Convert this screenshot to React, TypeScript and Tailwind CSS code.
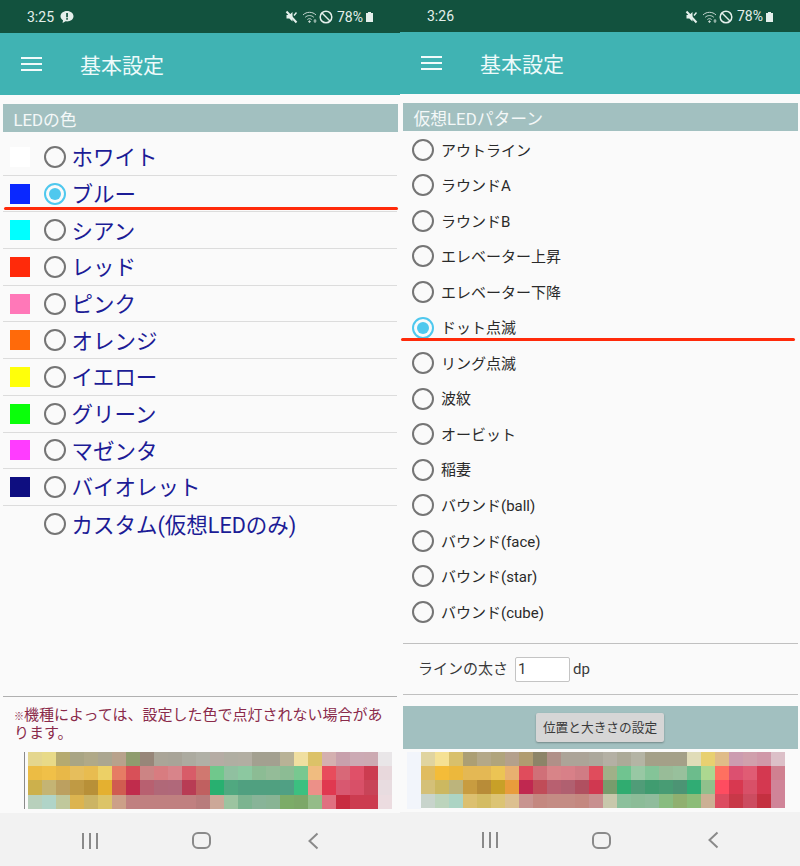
const leftMosaic = [
  ['e4d68e','e8da88','b5aa70','a9a584','b0a988','aba690','b8a28c','8f9c6e','978679','aaa598','a8a498','acaba0','b0b0a6','b5aca4','b0aea2','b2aea2','a3a090','a3a090','b8b296','f0dfa0','dcc268','d4b0b0','c8a0ac','ccaab4','ccaab2','e9e6e8'],
  ['ecbc44','f0c048','e8b848','e6be5c','e8bc50','ecd066','e67c64','d85058','cc8484','d87c80','d8848a','d85c68','d07870','70c88c','90c0a0','8cc8a0','8cbc94','94bc98','8cbc94','78c890','f0bc80','e84c5c','d86878','e05068','cc3c50','e8d8dc'],
  ['ccb04c','c4b474','bca060','c09a44','b89038','e4b030','d05c50','c02c4c','b86070','b06878','b0687a','b83c54','c06060','28b070','50a880','50a080','50a080','50a080','50a084','3cc080','ec9088','e03850','d85870','d85068','c84458','e8dce0'],
  ['b8d0bc','b0d4c8','c0c89c','dcb450','ccb464','dcc468','cca088','c08080','c08080','c08080','c08080','c08080','b87c7c','cca898','9cc4a0','7cb490','88b498','88b494','7cac68','7ca868','94bc88','e07080','c82c40','cc3c50','cc3c50','ecdce0'],
]

const rightMosaic = [
  ['e0d4a0','f5e194','d8c06c','ac9f74','b4a888','b0a47c','b4a08c','b09c70','8c8468','b09088','aca498','aca498','aca89c','b4b0a4','acaa98','b4b4a4','a4a088','a4a088','a4a088','e0dcb8','e8d070','e0bc88','cc9cb0','d0a0ac','d098a8','dcc0c8'],
  ['e0bc60','f4bc38','ecb83c','e4b854','e4b854','ecc454','e8b070','e04c5c','d07078','d88488','d88088','d07c84','e04c5c','a0b088','70c490','98c8a4','84c498','98bc98','98c09c','6cbc8c','acd890','ff7060','dc5070','e05c74','d43850','d08090'],
  ['d4c078','ccb860','bcb47c','c89c40','b88c38','c8a028','e89c3c','c02850','c04c58','b86070','b06070','b05060','d03850','789c6c','30ac70','509c78','409c70','489c74','4c9474','30ac74','90c08c','ff4c60','d83850','d85068','d43850','d08498'],
  ['c8d4cc','bcd4bc','acd4c4','dcc070','d4bc64','dcc474','dcc090','c89490','c48880','c48c84','c48c84','c48880','c89090','c8c8ac','8cc09c','8cbc98','90bc9c','88bc80','90b070','8cbc78','ccb094','dc4c60','c83848','cc4c60','c43040','d08498'],
]

const colors = [
  ['ホワイト', 'bg-white'],
  ['ブルー', 'bg-[#0a28ff]'],
  ['シアン', 'bg-[#00ffff]'],
  ['レッド', 'bg-[#ff2a0a]'],
  ['ピンク', 'bg-[#ff78b8]'],
  ['オレンジ', 'bg-[#ff6a0a]'],
  ['イエロー', 'bg-[#ffff0a]'],
  ['グリーン', 'bg-[#0aff0a]'],
  ['マゼンタ', 'bg-[#ff3cff]'],
  ['バイオレット', 'bg-[#0e0e80]'],
  ['カスタム(仮想LEDのみ)', ''],
]

const patterns = ['アウトライン', 'ラウンドA', 'ラウンドB', 'エレベーター上昇', 'エレベーター下降', 'ドット点滅', 'リング点滅', '波紋', 'オービット', '稲妻', 'バウンド(ball)', 'バウンド(face)', 'バウンド(star)', 'バウンド(cube)']

function Radio({ checked }: { checked?: boolean }) {
  if (checked) {
    return (
      <span className="flex h-[22px] w-[22px] shrink-0 items-center justify-center rounded-full border-2 border-[#4fc8ee]">
        <span className="h-3 w-3 rounded-full bg-[#4fc8ee]" />
      </span>
    )
  }
  return <span className="block h-[22px] w-[22px] shrink-0 rounded-full border-2 border-[#757575]" />
}

function StatusBar({ time, bubble, className }: { time: string; bubble?: boolean; className: string }) {
  return (
    <div className={`flex shrink-0 items-center justify-between bg-[#12523e] pl-[27px] pr-[27px] text-[#e4efeb] ${className}`}>
      <div className="flex items-center gap-[6px] pt-[1px] text-[14px]">
        <span>{time}</span>
        {bubble && (
          <svg width="14" height="14" viewBox="0 0 14 13">
            <path d="M7 0.5C3.300 0.500 0.500 2.800 0.500 5.700c0 1.700 1 3.200 2.500 4.100L2.600 12.500 5.600 10.800c.5.100.9.100 1.400.100 3.700 0 6.500-2.300 6.500-5.200S10.700.5 7 .5z" fill="#e4efeb" />
            <rect x="6.200" y="2.500" width="1.700" height="4.300" fill="#12523e" />
            <rect x="6.200" y="7.600" width="1.700" height="1.600" fill="#12523e" />
          </svg>
        )}
      </div>
      <div className="flex items-center gap-[1px] pt-[1px] text-[14px]">
        <svg width="13" height="14" viewBox="0 0 13 14" className="mr-[3px]">
          <path d="M1.500 5h2.800L7.500 2v9.500L4.300 8.500H1.500z" fill="#e4efeb" />
          <path d="M1.500 1.500L11.500 12.500" stroke="#e4efeb" strokeWidth="2" />
          <path d="M9 5.500l2.500-3" stroke="#e4efeb" strokeWidth="1.400" />
        </svg>
        <svg width="16" height="14" viewBox="0 0 16 14" fill="none" stroke="#c9d9d3" strokeWidth="1">
          <path d="M1 5c3.500-3.600 9.500-3.600 13 0" />
          <path d="M3.200 7.300c2.300-2.300 6.300-2.300 8.600 0" />
          <path d="M5.400 9.500c1.200-1.100 3-1.100 4.200 0" />
          <circle cx="7.500" cy="11.600" r=".8" fill="#c9d9d3" />
          <path d="M13 9v4M11.500 11h3" strokeWidth=".9" />
        </svg>
        <svg width="14" height="14" viewBox="0 0 14 14" fill="none" stroke="#e4efeb" strokeWidth="1.500" className="mr-[3px]">
          <circle cx="7" cy="7" r="5.800" />
          <path d="M3 3l8 8" />
        </svg>
        <span>78%</span>
        <span className="ml-[2px] flex flex-col items-center">
          <span className="h-[1px] w-[3px] bg-[#e4efeb]" />
          <span className="h-[9px] w-[7px] bg-[#e4efeb]" />
        </span>
      </div>
    </div>
  )
}

function AppBar() {
  return (
    <div className="flex h-[62px] shrink-0 items-center bg-[#40b3b3] pl-[21px] text-white">
      <div className="flex w-[21px] flex-col gap-[4px]">
        <span className="h-[2px] bg-[#f2fbfb]" />
        <span className="h-[2px] bg-[#f2fbfb]" />
        <span className="h-[2px] bg-[#f2fbfb]" />
      </div>
      <span className="ml-[38px] pt-[5px] text-[21px] text-[#eefafa]">基本設定</span>
    </div>
  )
}

function Mosaic({ rows }: { rows: string[][] }) {
  return (
    <div className="flex flex-col">
      {rows.map((row, i) => (
        <div key={i} className="flex h-[14.200px]">
          {row.map((c, j) => (
            <span key={j} className="w-[14px] shrink-0" style={{ backgroundColor: `#${c}` }} />
          ))}
        </div>
      ))}
    </div>
  )
}

function NavBar({ className }: { className: string }) {
  return (
    <div className={`flex flex-1 items-center bg-[#f2f2f2] pt-[3px] ${className}`}>
      <div className="flex w-[98px] justify-end gap-[5px]">
        <span className="h-[16px] w-[2px] bg-[#8a8a8a]" />
        <span className="h-[16px] w-[2px] bg-[#8a8a8a]" />
        <span className="h-[16px] w-[2px] bg-[#8a8a8a]" />
      </div>
      <span className="ml-[94px] h-[17px] w-[19px] rounded-[6px] border-2 border-[#8a8a8a]" />
      <svg width="12" height="18" viewBox="0 0 12 18" fill="none" stroke="#8a8a8a" strokeWidth="2" className="ml-[96px]">
        <path d="M10.500 1.500L2.500 9l8 7.500" />
      </svg>
    </div>
  )
}

function SectionBar({ children }: { children: React.ReactNode }) {
  return (
    <div className="mx-[2.500px] mt-[9px] flex h-[28px] shrink-0 items-center bg-[#a2c0c0] pl-[11px] pt-[5px] text-[16.800px] text-[#f4f8f8]">
      {children}
    </div>
  )
}

export default function App() {
  return (
    <div className="flex h-[866px] w-[800px] overflow-hidden bg-[#fafafa] font-['Roboto','Noto_Sans_CJK_JP',sans-serif]">
      {/* left phone */}
      <div className="relative flex w-[400px] flex-col">
        <StatusBar time="3:25" bubble className="h-[33px]" />
        <AppBar />
        <SectionBar>LEDの色</SectionBar>
        <div className="mt-[7px] flex shrink-0 flex-col">
          {colors.map(([label, bg], i) => (
            <div
              key={label}
              className={`mx-[3px] flex h-[36.700px] items-center pl-[7px] ${i < 10 ? 'border-b border-[#dcdcdc]' : ''}`}
            >
              <span className={`h-[20px] w-[20px] shrink-0 ${bg}`} />
              <span className="ml-[14px] flex"><Radio checked={i === 1} /></span>
              <span className="ml-[5.500px] pt-[3px] text-[21.500px] whitespace-nowrap text-[#1c1c96]">{label}</span>
            </div>
          ))}
        </div>
        <div className="mx-[3px] mt-[153px] shrink-0 border-t border-[#b0b0b0] pl-[11px] pt-[9px] text-[15px] leading-[18.500px] whitespace-nowrap text-[#8a2a4a]">
          <span className="text-[10px] leading-none">※</span>
          <span>機種によっては、設定した色で点灯されない場合があ</span>
          <br />
          <span>ります。</span>
        </div>
        <div className="mt-[9.500px] ml-[24px] shrink-0 border-l border-[#8a8a8a] pl-[3px]">
          <Mosaic rows={leftMosaic} />
        </div>
        <NavBar className="mt-[4px]" />
        <span className="absolute left-[4px] top-[207px] h-[3px] w-[394px] rounded-full bg-[#ff2a0a]" />
      </div>

      {/* right phone */}
      <div className="relative flex w-[400px] flex-col">
        <StatusBar time="3:26" className="h-[32px]" />
        <AppBar />
        <SectionBar>仮想LEDパターン</SectionBar>
        <div className="mt-[1px] flex shrink-0 flex-col">
          {patterns.map((label, i) => (
            <div key={label} className="flex h-[35.560px] items-center pl-[12px]">
              <Radio checked={i === 5} />
              <span className="ml-[7px] pt-[2px] text-[15px] whitespace-nowrap text-[#2a2a2a]">{label}</span>
            </div>
          ))}
        </div>
        <div className="mx-[2.500px] mt-[13px] flex h-[52px] shrink-0 items-center border-y border-[#c0c0c0] pl-[15.500px] text-[15px] text-[#3a3a3a]">
          <span className="pt-[2px]">ラインの太さ</span>
          <span className="ml-[7px] mt-[2px] flex h-[25px] w-[55px] items-center rounded-[2px] border border-[#c4c4c4] bg-white pl-[2px] text-[15px]">1</span>
          <span className="ml-[3px] pt-[2px]">dp</span>
        </div>
        <div className="mx-[2.500px] mt-[11px] flex h-[43px] shrink-0 items-center justify-center bg-[#a2c0c0]">
          <button className="h-[29px] w-[128px] rounded-[2px] bg-[#d6d6d6] text-[12.700px] text-[#3a3a3a] shadow-[0_1px_2px_rgba(0,0,0,0.3)]">
            位置と大きさの設定
          </button>
        </div>
        <div className="mt-[3px] flex shrink-0">
          <span className="ml-[7px] h-[57px] w-[14px] bg-[#f2f5fb]" />
          <Mosaic rows={rightMosaic} />
        </div>
        <NavBar className="mt-[3px]" />
        <span className="absolute left-[1px] top-[338px] h-[3px] w-[394px] rounded-full bg-[#ff2a0a]" />
      </div>
    </div>
  )
}
